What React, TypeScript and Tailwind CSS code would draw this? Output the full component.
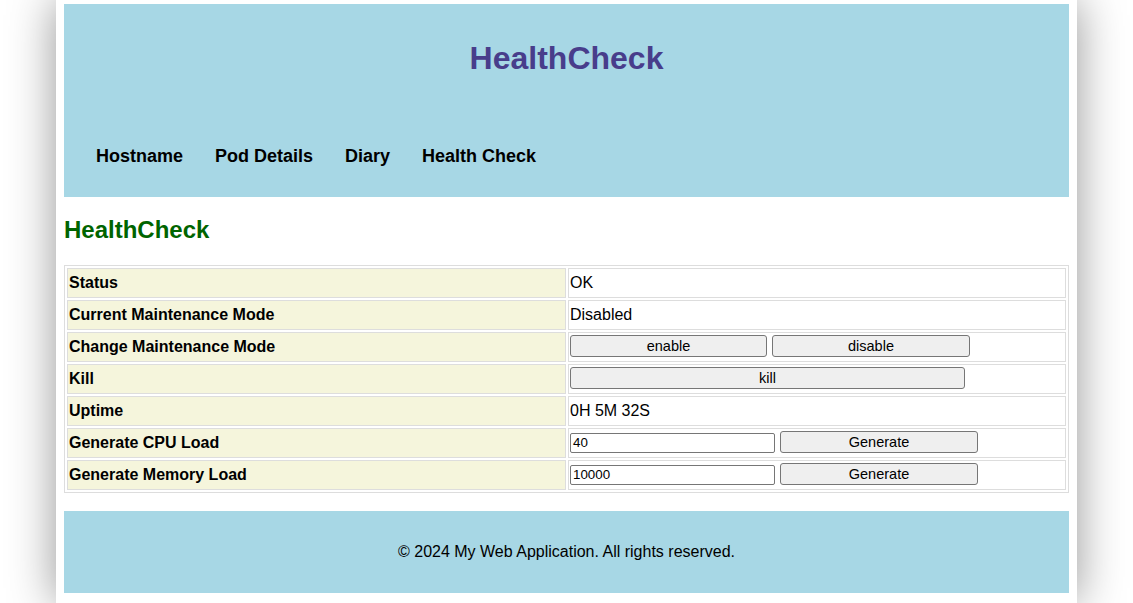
import React from "react";

const rows: { label: string; kind: "text" | "mode" | "kill" | "gen"; value?: string }[] = [
  { label: "Status", kind: "text", value: "OK" },
  { label: "Current Maintenance Mode", kind: "text", value: "Disabled" },
  { label: "Change Maintenance Mode", kind: "mode" },
  { label: "Kill", kind: "kill" },
  { label: "Uptime", kind: "text", value: "0H 5M 32S" },
  { label: "Generate CPU Load", kind: "gen", value: "40" },
  { label: "Generate Memory Load", kind: "gen", value: "10000" },
];

const btn =
  "h-[22px] bg-[#efefef] border border-[#767676] rounded-[3px] text-[14.5px] leading-[18px] text-black flex items-center justify-center shrink-0";

function ValueCell({ row }: { row: (typeof rows)[number] }) {
  if (row.kind === "text") {
    return (
      <div className="h-[30px] border border-[#dddddd] bg-white px-[1px] flex items-center text-[16px]">
        {row.value}
      </div>
    );
  }
  if (row.kind === "mode") {
    return (
      <div className="h-[30px] border border-[#dddddd] bg-white px-[1px] pt-[2px] flex items-start gap-[5px]">
        <button className={`${btn} w-[197px]`}>enable</button>
        <button className={`${btn} w-[198px]`}>disable</button>
      </div>
    );
  }
  if (row.kind === "kill") {
    return (
      <div className="h-[30px] border border-[#dddddd] bg-white px-[1px] pt-[2px] flex items-start">
        <button className={`${btn} w-[395px]`}>kill</button>
      </div>
    );
  }
  return (
    <div className="h-[30px] border border-[#dddddd] bg-white px-[1px] pt-[2px] flex items-start gap-[5px]">
      <div className="mt-[2px] h-[20px] w-[205px] border border-[#767676] rounded-[2px] bg-white px-[2px] flex items-center text-[13.33px] shrink-0">
        {row.value}
      </div>
      <button className={`${btn} w-[198px]`}>Generate</button>
    </div>
  );
}

export default function App() {
  return (
    <div className="min-h-[603px] bg-white overflow-hidden" style={{ fontFamily: '"Liberation Sans", Arial, sans-serif' }}>
      <div className="mx-[56px] w-[1021px] bg-white px-[8px] pt-[4px] pb-[10px] shadow-[0_0_44px_rgba(0,0,0,0.42)]">
        <header className="bg-[#a7d7e5] h-[193px] flex flex-col">
          <h1 className="mt-[36px] h-[37px] leading-[37px] text-center text-[32px] font-bold text-[#483d8b]">
            HealthCheck
          </h1>
          <nav className="mt-[69px] pl-[32px] flex gap-[32px] text-[18px] leading-[21px] font-bold text-black">
            <span>Hostname</span>
            <span>Pod Details</span>
            <span>Diary</span>
            <span>Health Check</span>
          </nav>
        </header>

        <h2 className="mt-[19px] h-[28px] leading-[28px] text-[24px] font-bold text-[#006400]">HealthCheck</h2>

        <div className="mt-[21px] border border-[#dddddd] p-[2px] grid grid-cols-[499px_1fr] gap-[2px] text-black">
          {rows.map((r) => (
            <React.Fragment key={r.label}>
              <div className="h-[30px] border border-[#dddddd] bg-[#f5f5dc] px-[1px] flex items-center text-[16px] font-bold">
                {r.label}
              </div>
              <ValueCell row={r} />
            </React.Fragment>
          ))}
        </div>

        <footer className="mt-[18px] h-[82px] bg-[#a7d7e5] flex items-center justify-center text-[16px] text-black">
          © 2024 My Web Application. All rights reserved.
        </footer>
      </div>
    </div>
  );
}
